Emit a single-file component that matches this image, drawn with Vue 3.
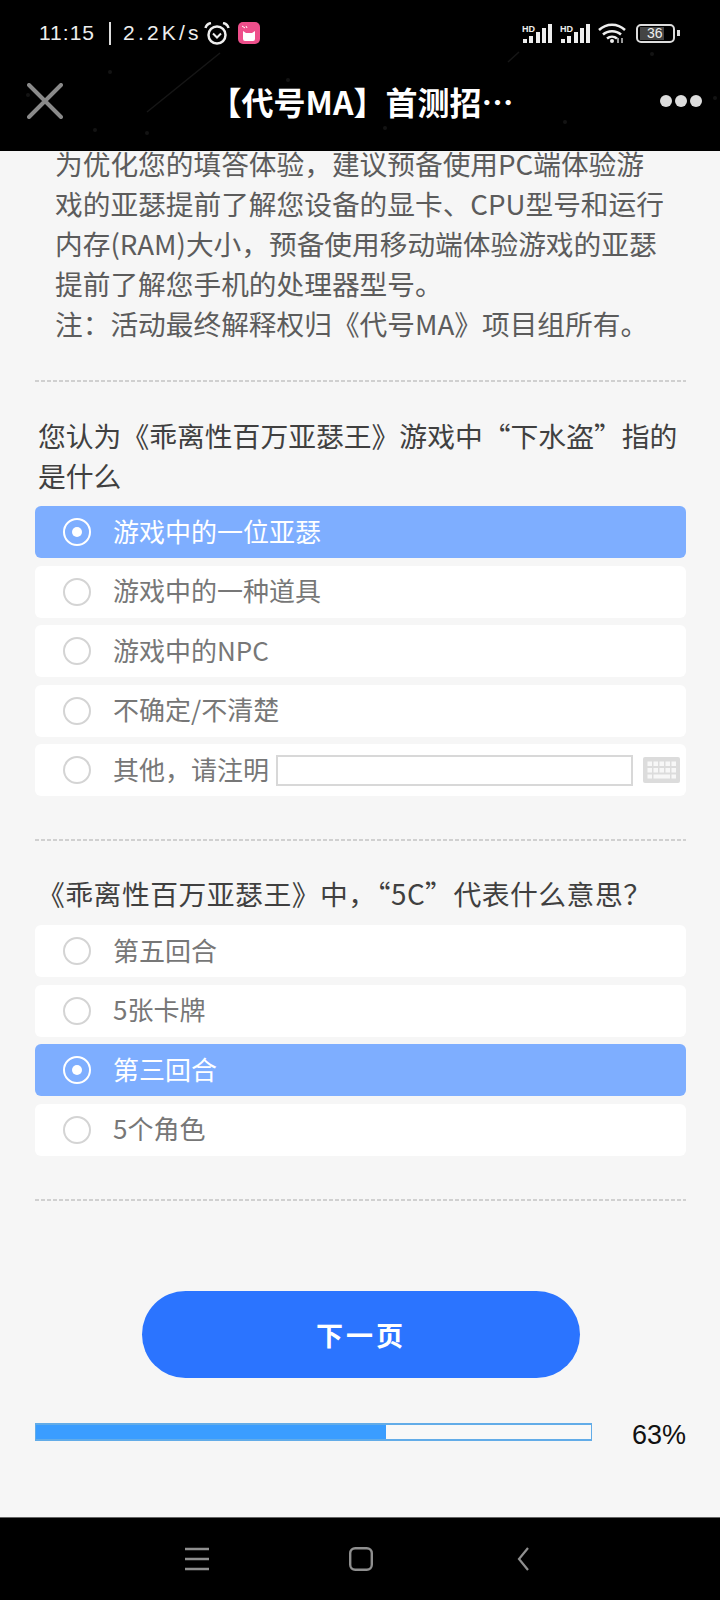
<script setup>
const intro = [
  '为优化您的填答体验，建议预备使用PC端体验游',
  '戏的亚瑟提前了解您设备的显卡、CPU型号和运行',
  '内存(RAM)大小，预备使用移动端体验游戏的亚瑟',
  '提前了解您手机的处理器型号。',
  '注：活动最终解释权归《代号MA》项目组所有。',
]
const q1 = [
  { text: '游戏中的一位亚瑟', on: true },
  { text: '游戏中的一种道具' },
  { text: '游戏中的NPC' },
  { text: '不确定/不清楚' },
]
const q2 = [
  { text: '第五回合' },
  { text: '5张卡牌' },
  { text: '第三回合', on: true },
  { text: '5个角色' },
]
const specks = [[288, 80], [110, 72], [95, 130], [147, 133], [385, 128], [565, 122], [652, 54], [715, 98], [28, 95]]
const progress = 63
</script>

<template>
  <div class="phone">
    <header class="top">
      <svg class="streaks" viewBox="0 0 720 151" width="720" height="151">
        <path d="M147 112L220 53M508 62l11-10" stroke="#161616" stroke-width="1.500" />
        <circle v-for="s in specks" :key="s[0]" :cx="s[0]" :cy="s[1]" r="2" fill="#131313" />
      </svg>
      <div class="status">
        <div class="statusLeft">
          <span class="time">11:15</span>
          <span class="sep"></span>
          <span class="speed">2.2K/s</span>
          <svg class="alarm" viewBox="0 0 26 23" width="26" height="23">
            <circle cx="13" cy="13" r="8.500" fill="none" stroke="#eee" stroke-width="2.500" />
            <path d="M9 11.500l4 4 4-4" fill="none" stroke="#eee" stroke-width="2" />
            <path d="M1.500 6Q2.500 2 7 1M24.500 6Q23.500 2 19 1" fill="none" stroke="#eee" stroke-width="2.500" />
          </svg>
          <svg class="appIcon" viewBox="0 0 22 22" width="22" height="22">
            <rect width="22" height="22" rx="5" fill="#ee4f8b" />
            <path d="M5 9l3 2h6l3-2v8a2 2 0 0 1-2 2H7a2 2 0 0 1-2-2z" fill="#fff" />
            <path d="M4 4l3 2M8 4l1 2" stroke="#fff" stroke-width="1" />
          </svg>
        </div>
        <div class="statusRight">
          <svg v-for="n in 2" :key="n" class="signal" viewBox="0 0 30 19" width="30" height="19">
            <text x="0" y="7.500" class="hd">HD</text>
            <rect x="1" y="15" width="4" height="4" fill="#eee" />
            <rect x="7" y="12" width="4" height="7" fill="#eee" />
            <rect x="14" y="8" width="4" height="11" fill="#eee" />
            <rect x="20" y="4" width="4" height="15" fill="#eee" />
            <rect x="26" y="0" width="4" height="19" fill="#eee" />
          </svg>
          <svg class="wifi" viewBox="0 0 28 20" width="28" height="20">
            <path d="M1 7c7.500-7 18.500-7 26 0M5 11.500c5-4.500 13-4.500 18 0M9 15.500c3-2.500 7-2.500 10 0" fill="none" stroke="#eee" stroke-width="2.500" />
            <circle cx="14" cy="18" r="2" fill="#eee" />
            <path d="M20 15v5M24 15v5" stroke="#ccc" stroke-width="1.500" />
          </svg>
          <div class="battery"><span>36</span></div>
          <span class="batteryTip"></span>
        </div>
      </div>
      <div class="nav">
        <svg viewBox="0 0 36 36" width="36" height="36">
          <path d="M2 2l32 32M34 2L2 34" stroke="#8a8a8a" stroke-width="4" stroke-linecap="round" />
        </svg>
        <div class="title">【代号MA】首测招…</div>
        <div class="dots"><i></i><i></i><i></i></div>
      </div>
    </header>

    <main class="content">
      <div class="intro">
        <p v-for="line in intro" :key="line">{{ line }}</p>
      </div>
      <div class="dash first"></div>

      <div class="question two">
        <p>您认为《乖离性百万亚瑟王》游戏中“下水盗”指的</p>
        <p>是什么</p>
      </div>
      <div class="options">
        <div v-for="o in q1" :key="o.text" class="option" :class="{ on: o.on }">
          <span class="radio"></span>
          <span class="optText">{{ o.text }}</span>
        </div>
        <div class="option">
          <span class="radio"></span>
          <span class="optText otherLabel">其他，请注明</span>
          <span class="otherInput"></span>
          <svg class="keyboard" viewBox="0 0 37 26" width="37" height="26">
            <rect width="37" height="26" rx="2" fill="#dcdcdc" />
            <g fill="#f7f7f7">
              <rect v-for="i in 5" :key="'a' + i" :x="4.500 + (i - 1) * 6" y="4.500" width="4.500" height="4.500" />
              <rect v-for="i in 5" :key="'b' + i" :x="4.500 + (i - 1) * 6" y="11" width="4.500" height="4.500" />
              <rect x="4.500" y="17.500" width="4.500" height="4" />
              <rect x="10.500" y="17.500" width="16.500" height="4" />
              <rect x="28.500" y="17.500" width="4.500" height="4" />
            </g>
          </svg>
        </div>
      </div>
      <div class="dash"></div>

      <div class="question one">
        <p>《乖离性百万亚瑟王》中，“5C”代表什么意思？</p>
      </div>
      <div class="options">
        <div v-for="o in q2" :key="o.text" class="option" :class="{ on: o.on }">
          <span class="radio"></span>
          <span class="optText">{{ o.text }}</span>
        </div>
      </div>
      <div class="dash"></div>

      <button class="next">下一页</button>

      <div class="progressRow">
        <div class="track">
          <div class="fill" :style="{ width: progress + '%' }"></div>
        </div>
        <span class="percent">{{ progress }}%</span>
      </div>
    </main>

    <footer class="bottom">
      <svg viewBox="0 0 24 24" width="24" height="24">
        <path d="M0 2h24M0 12h24M0 22h24" stroke="#8f8f8f" stroke-width="2.500" />
      </svg>
      <svg viewBox="0 0 24 24" width="24" height="24">
        <rect x="1.200" y="1.200" width="21.600" height="21.600" rx="5" fill="none" stroke="#8f8f8f" stroke-width="2.400" />
      </svg>
      <svg class="back" viewBox="0 0 12 24" width="12" height="24">
        <path d="M11 1L2 12l9 11" fill="none" stroke="#8f8f8f" stroke-width="2.200" />
      </svg>
    </footer>
  </div>
</template>

<style>
body {
  margin: 0;
  background: #000;
}
</style>

<style scoped>
.phone {
  display: flex;
  flex-direction: column;
  width: 720px;
  height: 1600px;
  overflow: hidden;
  font-family: "Noto Sans CJK SC", "Noto Sans", sans-serif;
  background: #f6f6f6;
}

p {
  margin: 0;
  white-space: nowrap;
}

.top {
  height: 151px;
  flex: none;
  background: #000;
  color: #eee;
  position: relative;
  z-index: 1;
}

.streaks {
  position: absolute;
  left: 0;
  top: 0;
}

.status, .nav {
  position: relative;
}

.status {
  display: flex;
  justify-content: space-between;
  align-items: center;
  height: 66px;
  padding: 0 40px 0 39px;
}

.statusLeft, .statusRight {
  display: flex;
  align-items: center;
}

.time, .speed {
  font-family: "Liberation Sans", sans-serif;
  font-size: 21px;
}

.time {
  letter-spacing: 1px;
}

.speed {
  letter-spacing: 3.200px;
}

.sep {
  width: 2px;
  height: 23px;
  margin: 0 12px 0 14px;
  background: #ddd;
}

.alarm {
  margin-left: 2px;
}

.appIcon {
  margin-left: 8px;
}

.signal {
  margin-right: 8px;
}

.hd {
  font-family: "Liberation Sans", sans-serif;
  font-size: 9px;
  font-weight: 700;
  fill: #eee;
}

.wifi {
  margin-right: 10px;
}

.battery {
  display: flex;
  align-items: center;
  box-sizing: border-box;
  width: 39px;
  height: 19px;
  padding-left: 2px;
  border: 2px solid #ddd;
  border-radius: 5px;
  font-family: "Liberation Sans", sans-serif;
  font-size: 14px;
}

.battery span {
  padding: 0 1px 0 7px;
  line-height: 13px;
  background: #444;
}

.batteryTip {
  width: 3px;
  height: 6px;
  margin-left: 2px;
  background: #ddd;
}

.nav {
  display: flex;
  align-items: center;
  justify-content: space-between;
  height: 70px;
  padding: 0 18px 0 27px;
}

.title {
  font-size: 32px;
  font-weight: 700;
  color: #fff;
}

.dots {
  display: flex;
  gap: 3px;
}

.dots i {
  width: 12px;
  height: 12px;
  border-radius: 50%;
  background: #ddd;
}

.content {
  flex: 1;
  min-height: 0;
  padding: 0 34px 0 35px;
}

.intro {
  margin: -8px -14px 0 20px;
  font-size: 27.700px;
  line-height: 40px;
  color: #5c5c5c;
}

.dash {
  height: 2px;
  margin-top: 43px;
  background: repeating-linear-gradient(90deg, #d0d0d0 0 4px, transparent 4px 6px);
}

.dash.first {
  margin-top: 37px;
}

.question {
  font-size: 27.800px;
  line-height: 40px;
  color: #404040;
}

.question.two {
  margin: 33px 0 0 3px;
}

.question.one {
  margin: 32px 0 0 2px;
  letter-spacing: 0.500px;
}

.options {
  display: flex;
  flex-direction: column;
  gap: 7.500px;
  margin-top: 11px;
}

.question.one + .options {
  margin-top: 12px;
}

.option {
  display: flex;
  align-items: center;
  box-sizing: border-box;
  height: 52px;
  padding: 0 6px 0 28px;
  border-radius: 6px;
  background: #fff;
  font-size: 26px;
  color: #777;
}

.option.on {
  background: #7eaeff;
  color: #fff;
}

.optText {
  padding-bottom: 4px;
}

.radio {
  box-sizing: border-box;
  flex: none;
  width: 28px;
  height: 28px;
  margin-right: 22px;
  border: 2px solid #d4d4d4;
  border-radius: 50%;
  position: relative;
}

.on .radio {
  border-color: #fff;
}

.on .radio::after {
  content: "";
  position: absolute;
  left: 7px;
  top: 7px;
  width: 10px;
  height: 10px;
  border-radius: 50%;
  background: #fff;
}

.otherLabel {
  white-space: nowrap;
}

.otherInput {
  box-sizing: border-box;
  width: 357px;
  height: 31px;
  margin-left: 7px;
  border: 2px solid #d8d8d8;
  background: #fff;
}

.keyboard {
  margin-left: auto;
}

.next {
  display: block;
  width: 438px;
  height: 87px;
  margin: 90.500px 0 0 107px;
  border: 0;
  border-radius: 44px;
  background: #2b74ff;
  color: #fff;
  font: 700 27px "Noto Sans CJK SC", sans-serif;
  letter-spacing: 3px;
}

.progressRow {
  display: flex;
  align-items: center;
  justify-content: space-between;
  margin-top: 42px;
}

.track {
  box-sizing: border-box;
  width: 557px;
  height: 18px;
  border-style: solid;
  border-width: 2px 1px;
  border-color: #62ace8;
  background: #f8f8f8;
}

.fill {
  height: 100%;
  background: #3a9dff;
}

.percent {
  padding-top: 6px;
  font-family: "Liberation Sans", sans-serif;
  font-size: 27px;
  line-height: 18px;
  color: #111;
}

.bottom {
  flex: none;
  display: flex;
  align-items: center;
  height: 82px;
  padding-left: 185px;
  gap: 140px;
  background: #000;
  border-top: 1px solid #666;
}

.back {
  margin-left: 4px;
}
</style>
